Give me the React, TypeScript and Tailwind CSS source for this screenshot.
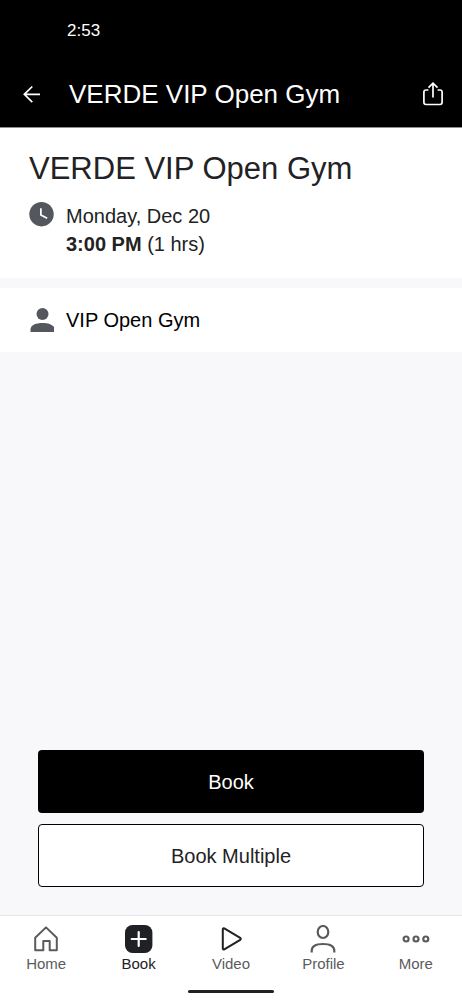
import React from "react";

type Tab = { label: string; active?: boolean; icon: React.ReactNode };

const tabs: Tab[] = [
  {
    label: "Home",
    icon: (
      <svg className="size-7" viewBox="0 0 28 28" fill="none" stroke="currentColor" strokeWidth="2" aria-hidden="true">
        <path d="M3.2 12.8 14 2.4l10.800 10.400v12.400h-7.100v-9.200h-6.400v9.200H3.200z" strokeLinejoin="round" />
      </svg>
    ),
  },
  {
    label: "Book",
    active: true,
    icon: (
      <svg className="size-7" viewBox="0 0 28 28" aria-hidden="true">
        <rect x="0" y="0" width="27.4" height="28" rx="7.5" fill="currentColor" />
        <path d="M13.700 7v14M6.700 14h14" stroke="white" strokeWidth="2.200" strokeLinecap="round" />
      </svg>
    ),
  },
  {
    label: "Video",
    icon: (
      <svg className="size-7 text-[#202124]" viewBox="0 0 28 28" fill="none" stroke="currentColor" strokeWidth="2" aria-hidden="true">
        <path d="M5.8 4.200c0-.9.8-1.300 1.500-.9l15.900 9.600c.8.5.8 1.400 0 1.900L7.300 24.400c-.7.4-1.500 0-1.500-.9z" strokeLinejoin="round" />
      </svg>
    ),
  },
  {
    label: "Profile",
    icon: (
      <svg className="size-7" viewBox="0 0 28 28" fill="none" stroke="currentColor" strokeWidth="2.200" aria-hidden="true">
        <ellipse cx="14" cy="7" rx="5.300" ry="6" />
        <path d="M2.700 27.400v-1.700c0-4.200 4.200-6.700 11.300-6.700s11.300 2.500 11.300 6.700v1.700" />
      </svg>
    ),
  },
  {
    label: "More",
    icon: (
      <svg className="size-7" viewBox="0 0 28 28" fill="none" stroke="currentColor" strokeWidth="2.200" aria-hidden="true">
        <circle cx="4.100" cy="14" r="2.500" />
        <circle cx="14" cy="14" r="2.500" />
        <circle cx="23.800" cy="14" r="2.500" />
      </svg>
    ),
  },
];

export default function App() {
  return (
    <div className="flex min-h-screen flex-col bg-[#f8f8fb] font-['Liberation_Sans',Arial,sans-serif] text-[#222224]">
      <header className="border-b border-[#8f8f93] bg-black text-white">
        <div className="px-[67px] pt-[19px] text-[17px] leading-6">2:53</div>
        <div className="flex items-center pt-[31px] pr-4 pb-[13px] pl-5">
          <button type="button" aria-label="Back" className="mr-[25px] flex size-6 items-center">
            <svg className="size-6" viewBox="0 0 24 24" fill="none" stroke="currentColor" strokeWidth="1.7" aria-hidden="true">
              <path d="M20 12.300H4.300M12.300 4.500 4.300 12.300l8 7.800" />
            </svg>
          </button>
          <div className="flex-1 text-[26px] leading-10">VERDE VIP Open Gym</div>
          <button type="button" aria-label="Share" className="flex size-[26px] items-center">
            <svg className="size-[26px]" viewBox="0 0 26 26" fill="none" stroke="currentColor" strokeWidth="1.7" aria-hidden="true">
              <path d="M8.400 9H6c-1.500 0-2.100.7-2.100 2.100v10.200c0 1.500.6 2.200 2.100 2.200h14c1.500 0 2.100-.7 2.100-2.200V11.100C22.100 9.700 21.500 9 20 9h-2.400" />
              <path d="M13 16.500V2.500M8.500 6.700 13 2.200l4.500 4.500" />
            </svg>
          </button>
        </div>
      </header>

      <main className="flex flex-1 flex-col">
        <section className="bg-white px-[29px] pt-[21px] pb-5">
          <h1 className="text-[31px] leading-10">VERDE VIP Open Gym</h1>
          <div className="mt-[13px] flex gap-3">
            <svg className="size-[25px] shrink-0 text-[#54575e]" viewBox="0 0 24 24" aria-hidden="true">
              <circle cx="12" cy="11.700" r="11.700" fill="currentColor" />
              <path d="M11.400 6v6.400l6 3.200" fill="none" stroke="white" strokeWidth="1.700" />
            </svg>
            <div className="text-xl leading-7">
              <div>Monday, Dec 20</div>
              <div>
                <strong>3:00 PM</strong> (1 hrs)
              </div>
            </div>
          </div>
        </section>

        <section className="mt-2.5 flex items-center gap-3 bg-white px-[30px] py-[18px]">
          <svg className="size-6 text-[#54575e]" viewBox="0 0 24 24" fill="currentColor" aria-hidden="true">
            <circle cx="12.500" cy="6" r="6" />
            <path d="M0.500 24v-2.500C0.500 17 6 15 12.500 15S24.500 17 24.500 21.500V24z" />
          </svg>
          <p className="text-xl leading-7 text-black">VIP Open Gym</p>
        </section>

        <div className="mt-auto flex flex-col gap-[11px] px-[38px] pb-7">
          <button type="button" className="h-[63px] rounded bg-black text-xl text-white">
            Book
          </button>
          <button type="button" className="h-[63px] rounded border border-black bg-white text-xl">
            Book Multiple
          </button>
        </div>
      </main>

      <footer className="border-t border-[#e5e6e9] bg-white">
        <nav className="grid grid-cols-5 pt-[9px]">
          {tabs.map((tab) => (
            <a
              key={tab.label}
              href={`#${tab.label.toLowerCase()}`}
              aria-current={tab.active ? "page" : undefined}
              className={
                tab.active
                  ? "flex flex-col items-center gap-px text-[#202124]"
                  : "flex flex-col items-center gap-px text-[#5a5b5e]"
              }
            >
              {tab.icon}
              <span className="text-[15px] leading-5">{tab.label}</span>
            </a>
          ))}
        </nav>
        <div className="mx-auto mt-4 mb-[7px] h-[3px] w-[86px] rounded-full bg-[#202124]" />
      </footer>
    </div>
  );
}
